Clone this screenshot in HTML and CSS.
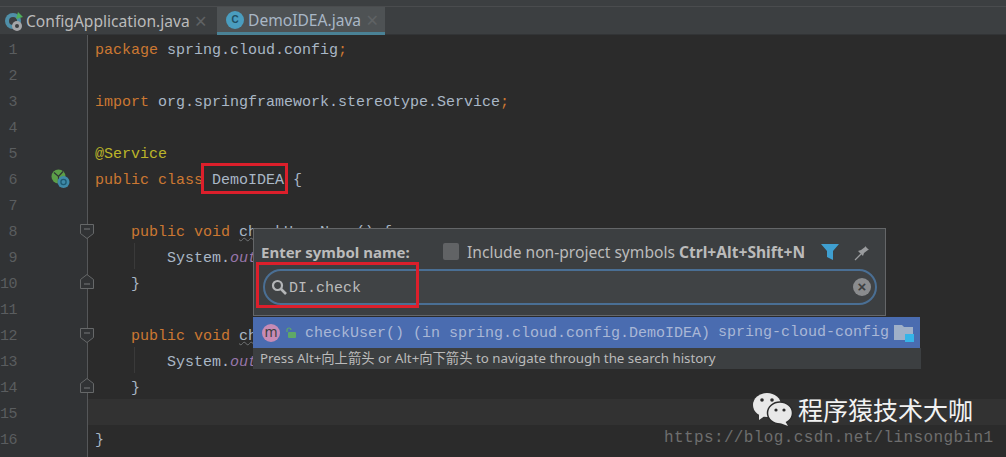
FILE: index.html
```html
<!DOCTYPE html>
<html lang="en">
<head>
<meta charset="utf-8">
<title>DemoIDEA.java</title>
<link rel="stylesheet" href="styles.css">
</head>
<body>
<div class="ide">
  <div class="tabs">
    <div class="tab tab-first">
      <svg class="tab-icon" width="22" height="22" viewBox="0 0 22 22">
        <circle cx="9" cy="11" r="8" fill="#4f8fa8"/>
        <circle cx="9" cy="11" r="4" fill="#3c3f41"/>
        <path d="M12 9l2-7 5 5z" fill="#4fae5a"/>
        <circle cx="13" cy="16" r="5" fill="#a4a6a8"/>
        <circle cx="13" cy="16" r="2" fill="#3c3f41"/>
      </svg>
      <span class="tab-name">ConfigApplication.java</span>
      <span class="tab-close">×</span>
    </div>
    <div class="tab tab-active">
      <span class="class-icon">C</span>
      <span class="tab-name">DemoIDEA.java</span>
      <span class="tab-close">×</span>
    </div>
  </div>
  <div class="editor">
    <div class="gutter">
      <div class="gutter-row"><span class="num">1</span></div>
      <div class="gutter-row"><span class="num">2</span></div>
      <div class="gutter-row"><span class="num">3</span></div>
      <div class="gutter-row"><span class="num">4</span></div>
      <div class="gutter-row"><span class="num">5</span></div>
      <div class="gutter-row">
        <span class="num">6</span>
        <svg class="marker" width="20" height="21" viewBox="0 0 20 21">
          <circle cx="7.500" cy="8.500" r="7" fill="#5c9e48"/>
          <path d="M3 4.500l4.500 4 4.500-5M7.500 8.500v7" stroke="#2f3335" stroke-width="1.200" fill="none"/>
          <circle cx="12.500" cy="14" r="6" fill="#3f8aa8"/>
          <circle cx="12.500" cy="14" r="2.600" fill="none" stroke="#1e5a72" stroke-width="1.300"/>
        </svg>
      </div>
      <div class="gutter-row"><span class="num">7</span></div>
      <div class="gutter-row">
        <span class="num">8</span>
        <svg class="fold fold-start" width="14" height="20" viewBox="0 0 14 20"><path d="M.5 2.500h13v9l-6.500 5-6.500-5z" fill="#313335" stroke="#666869"/><path d="M4 7h6" stroke="#77797b"/></svg>
      </div>
      <div class="gutter-row"><span class="num">9</span></div>
      <div class="gutter-row">
        <span class="num">10</span>
        <svg class="fold fold-end" width="14" height="20" viewBox="0 0 14 20"><path d="M.5 17.500v-9l6.500-5 6.500 5v9z" fill="#313335" stroke="#666869"/><path d="M4 13h6" stroke="#77797b"/></svg>
      </div>
      <div class="gutter-row"><span class="num">11</span></div>
      <div class="gutter-row">
        <span class="num">12</span>
        <svg class="fold fold-start" width="14" height="20" viewBox="0 0 14 20"><path d="M.5 2.500h13v9l-6.500 5-6.500-5z" fill="#313335" stroke="#666869"/><path d="M4 7h6" stroke="#77797b"/></svg>
      </div>
      <div class="gutter-row"><span class="num">13</span></div>
      <div class="gutter-row">
        <span class="num">14</span>
        <svg class="fold fold-end" width="14" height="20" viewBox="0 0 14 20"><path d="M.5 17.500v-9l6.500-5 6.500 5v9z" fill="#313335" stroke="#666869"/><path d="M4 13h6" stroke="#77797b"/></svg>
      </div>
      <div class="gutter-row"><span class="num">15</span></div>
      <div class="gutter-row"><span class="num">16</span></div>
    </div>
    <div class="code">
      <div class="line"><span class="kw">package</span> spring.cloud.config<span class="kw">;</span></div>
      <div class="line"></div>
      <div class="line"><span class="kw">import</span> org.springframework.stereotype.Service<span class="kw">;</span></div>
      <div class="line"></div>
      <div class="line"><span class="ann">@Service</span></div>
      <div class="line"><span class="kw">public class</span> DemoIDEA {</div>
      <div class="line"></div>
      <div class="line indent-1"><span class="kw">public void</span> <span class="squiggle">checkUserName</span>() {</div>
      <div class="line indent-2">System.<span class="field">out</span></div>
      <div class="line indent-1">}</div>
      <div class="line"></div>
      <div class="line indent-1"><span class="kw">public void</span> <span class="squiggle">ch</span></div>
      <div class="line indent-2">System.<span class="field">out</span></div>
      <div class="line indent-1">}</div>
      <div class="line line-current"></div>
      <div class="line">}</div>
    </div>
  </div>

  <div class="redbox redbox-class"></div>

  <div class="popup">
    <div class="popup-head">
      <div class="popup-title">
        <span class="popup-label">Enter symbol name:</span>
        <span class="checkbox"></span>
        <span class="include">Include non-project symbols <b>Ctrl+Alt+Shift+N</b></span>
        <svg class="filter" width="18" height="18" viewBox="0 0 18 18"><path d="M0 1h18l-6 7v9l-6-3V8z" fill="#3f9fd0"/></svg>
        <svg class="pin" width="18" height="18" viewBox="0 0 18 18"><path d="M1 17l6-6" stroke="#9a9c9e" stroke-width="1.300"/><path d="M4 8l5 5 1-3 4-3 1 0-4-4 0 1-4 3z" fill="#9a9c9e"/></svg>
      </div>
      <div class="search">
        <svg class="lens" width="16" height="16" viewBox="0 0 16 16"><circle cx="6.500" cy="6.500" r="4.500" fill="none" stroke="#b4b6b8" stroke-width="2.200"/><path d="M10 10l5 5" stroke="#b4b6b8" stroke-width="2.600"/></svg>
        <span class="query">DI.check</span>
        <span class="clear">×</span>
      </div>
    </div>
    <div class="result">
      <span class="method-icon">m</span>
      <svg class="lock" width="10" height="12" viewBox="0 0 10 12"><path d="M1 5V3a2 2 0 0 1 4 0" fill="none" stroke="#5fa868" stroke-width="1.200"/><rect x="2" y="5" width="8" height="6" rx="1" fill="#5fa868"/></svg>
      <span class="result-text">checkUser() (in spring.cloud.config.DemoIDEA)</span>
      <span class="result-module">spring-cloud-config</span>
      <svg class="module-icon" width="20" height="18" viewBox="0 0 20 18"><path d="M0 1h8l2 2h9v13H0z" fill="#9fb0c8"/><rect x="11" y="10" width="9" height="8" fill="#35b4e8"/></svg>
    </div>
    <div class="hint">Press Alt+向上箭头 or Alt+向下箭头 to navigate through the search history</div>
  </div>

  <div class="redbox redbox-search"></div>

  <div class="watermark">
    <svg class="wechat" width="42" height="36" viewBox="0 0 42 36">
      <ellipse cx="15" cy="14" rx="14" ry="12" fill="#e8e8e8"/>
      <path d="M7 22l0 7 7-5z" fill="#e8e8e8"/>
      <circle cx="10" cy="9" r="1.800" fill="#2b2b2b"/><circle cx="20" cy="9" r="1.800" fill="#2b2b2b"/>
      <ellipse cx="28" cy="22" rx="12.500" ry="11" fill="#e8e8e8" stroke="#2b2b2b" stroke-width="1.500"/>
      <path d="M33 30l3 5-8-3z" fill="#e8e8e8"/>
      <circle cx="24" cy="19" r="1.600" fill="#2b2b2b"/><circle cx="32" cy="19" r="1.600" fill="#2b2b2b"/>
    </svg>
    <span class="wm-title">程序猿技术大咖</span>
  </div>
  <div class="wm-url">https://blog.csdn.net/linsongbin1</div>
</div>
</body>
</html>
```

FILE: styles.css
```css
* { box-sizing: border-box; }
html, body { margin: 0; padding: 0; }
body { width: 1006px; height: 457px; overflow: hidden; background: #2b2b2b; }

.ide { position: relative; width: 1006px; height: 457px; overflow: hidden; display: flex; flex-direction: column; font-family: "Liberation Mono", monospace; }

.tabs { height: 35px; flex: none; background: #3c3f41; padding-top: 7px; display: flex; align-items: stretch; box-shadow: inset 0 -1px 0 #323436, inset 0 6px 0 #3c3f41, inset 0 7px 0 #4a4c4e; }
.tab { display: flex; align-items: center; font-family: "Noto Sans", sans-serif; font-size: 15.600px; color: #bbbbbb; }
.tab-first { width: 217px; padding-left: 4px; }
.tab-active { width: 168px; padding-left: 9px; padding-top: 1px; background: #4e5254; border-bottom: 3px solid #4a8296; color: #a9b7c6; }
.tab-icon { flex: none; }
.tab-close { margin-left: 5px; color: #5f6264; font-size: 21px; line-height: 1; }
.class-icon { flex: none; width: 18px; height: 18px; margin-right: 4px; border-radius: 50%; background: #4a9dbf; color: #1f4e63; font: bold 10px/18px "Liberation Sans", sans-serif; text-align: center; }

.editor { flex: 1; display: flex; min-height: 0; }
.gutter { width: 88px; flex: none; background: #313335; border-right: 1px solid #555759; }
.gutter-row { height: 26px; position: relative; display: flex; align-items: center; padding-top: 4px; }
.num { width: 17px; text-align: right; color: #5a5d5f; font-size: 15px; letter-spacing: -.5px; }
.marker { position: absolute; left: 51px; top: 3px; }
.fold { position: absolute; left: 80px; }
.fold-start { top: 5px; }
.fold-end { top: 2px; }

.code { flex: 1; font-size: 15px; color: #a9b7c6; }
.line { height: 26px; line-height: 21px; padding-top: 5px; padding-left: 7px; white-space: pre; }
.line-current { background: #323232; }
.indent-1 { padding-left: 43px; }
.indent-2 { padding-left: 79px; background: linear-gradient(#3a3a3a, #3a3a3a) 46px 0 / 1px 100% no-repeat; }
.kw { color: #cc7832; }
.ann { color: #bbb529; }
.field { color: #9876aa; font-style: italic; }
.squiggle { text-decoration: underline wavy #6f7274 1px; }

.redbox { position: absolute; border: 3px solid #dc1f2b; }
.redbox-class { left: 201px; top: 163px; width: 87px; height: 31px; }
.redbox-search { left: 256px; top: 262px; width: 163px; height: 46px; }

.popup { position: absolute; left: 253px; top: 228px; width: 668px; font-family: "Noto Sans", sans-serif; color: #bbbbbb; }
.popup-head { width: 633px; height: 88px; background: #3c3f41; border: 1px solid #646668; padding: 0 7px; }
.popup-title { height: 40px; padding-top: 5px; display: flex; align-items: center; }
.popup-label { font-weight: 700; font-size: 15px; width: 182px; white-space: nowrap; }
.checkbox { width: 16px; height: 17px; flex: none; background: #616365; border-radius: 2px; margin-right: 8px; }
.include { font-size: 15.600px; white-space: nowrap; }
.include b { font-weight: 700; }
.filter { margin-left: 16px; flex: none; }
.pin { margin-left: 15px; flex: none; }
.search { height: 36px; margin-left: 2px; width: 614px; border: 2px solid #4a6f94; border-radius: 18px; background: #404345; display: flex; align-items: center; padding: 0 4px 0 6px; }
.lens { flex: none; }
.query { font-family: "Liberation Mono", monospace; font-size: 15px; color: #bbbbbb; margin-left: 2px; padding-top: 2px; flex: 1; }
.clear { width: 18px; height: 18px; border-radius: 50%; background: #8a8c8e; color: #3c3f41; font: bold 15px/18px "Liberation Sans", sans-serif; text-align: center; }
.result { margin-top: 1px; height: 31px; background: #4a6cb0; display: flex; align-items: center; padding-left: 9px; width: 667px; white-space: pre; font-family: "Liberation Mono", monospace; font-size: 15px; color: #a9b7d6; }
.method-icon { width: 18px; height: 18px; flex: none; border-radius: 50%; background: #c78bb5; color: #3c3f41; font: 14px/16px "Noto Sans", sans-serif; text-align: center; }
.lock { flex: none; margin-left: 6px; }
.result-text { margin-left: 9px; padding-top: 2px; }
.result-module { margin-left: 8px; }
.module-icon { flex: none; margin-left: 5px; }
.hint { width: 668px; height: 21px; line-height: 21px; background: #3c3f41; padding-left: 7px; font-size: 13.300px; white-space: nowrap; font-family: "Noto Sans", "Noto Sans CJK SC", sans-serif; }

.watermark { position: absolute; left: 752px; top: 391px; display: flex; align-items: center; }
.wechat { flex: none; }
.wm-title { margin-left: 4px; font-family: "Noto Sans CJK SC", sans-serif; font-size: 25px; color: #f2f2f2; white-space: nowrap; }
.wm-url { position: absolute; left: 664px; top: 429px; font-family: "Liberation Mono", monospace; font-size: 16px; letter-spacing: .38px; color: #6e6e6e; white-space: nowrap; }
```
